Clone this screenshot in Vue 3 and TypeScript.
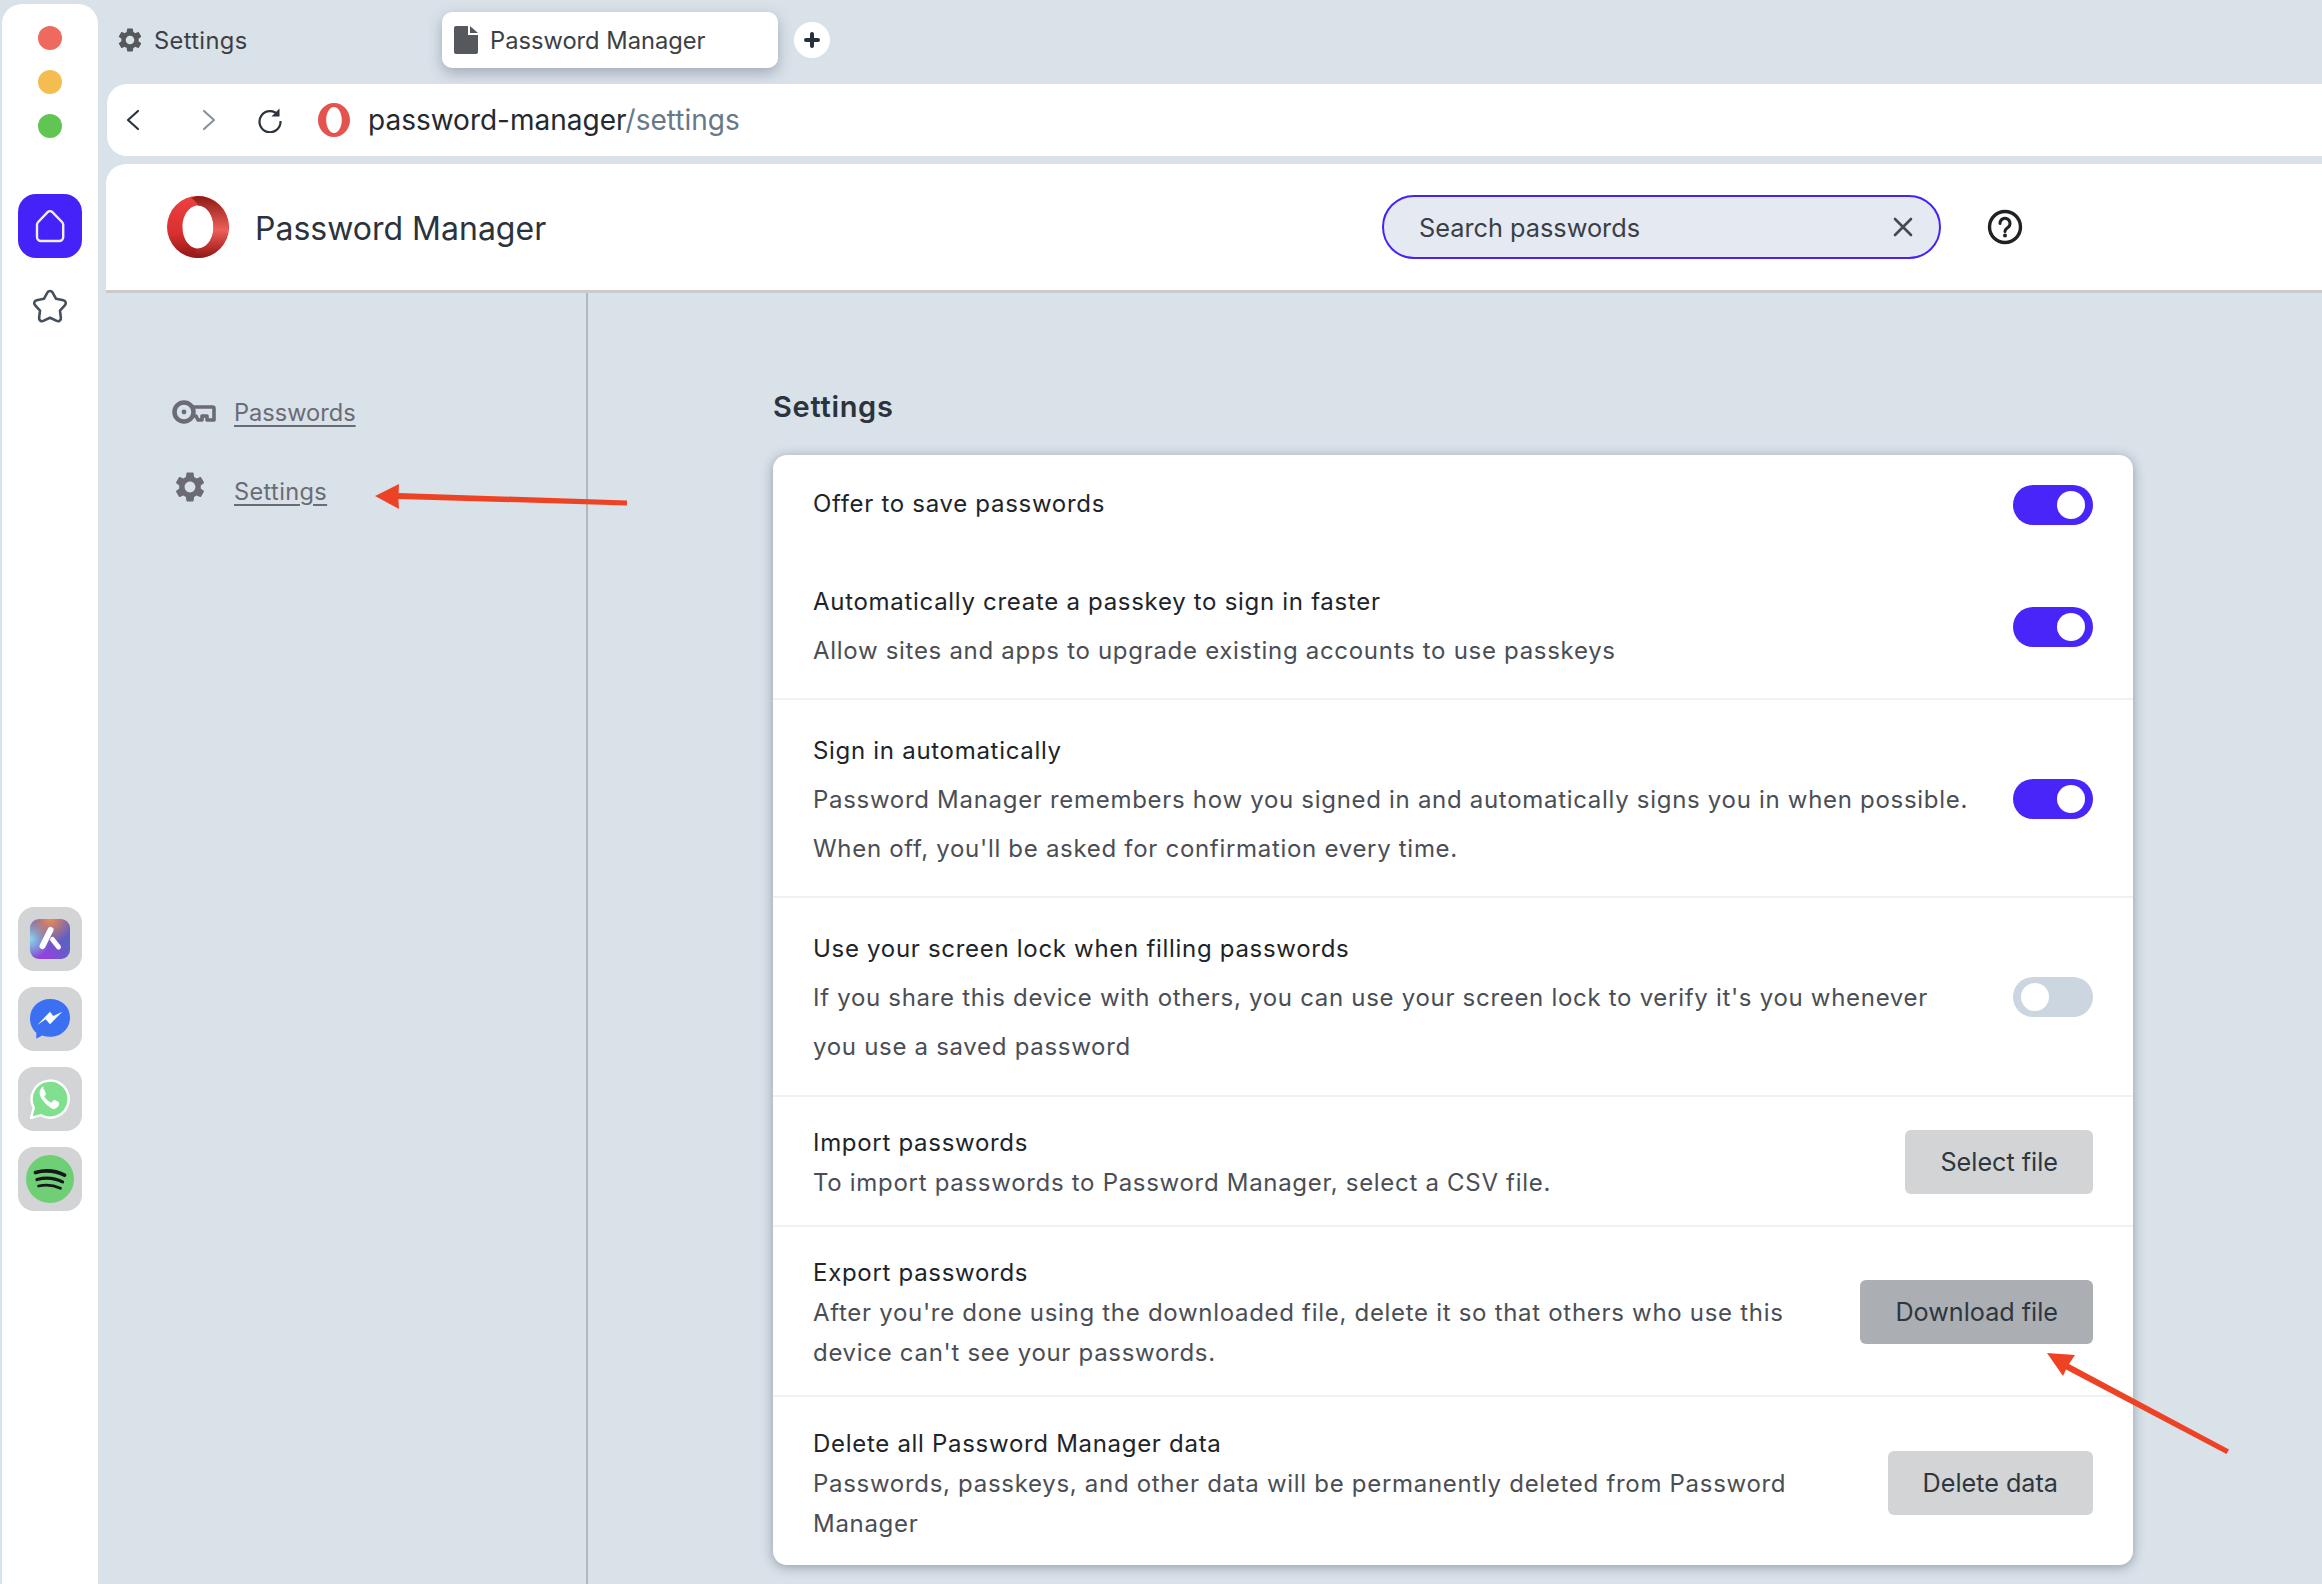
<script setup lang="ts">
interface Row {
  title: string
  lines: string[]
  kind: 'toggle' | 'button'
  on?: boolean
  label?: string
  active?: boolean
  cls: string
}

const rows: Row[] = [
  { title: 'Offer to save passwords', lines: [], kind: 'toggle', on: true, cls: 'wide first' },
  { title: 'Automatically create a passkey to sign in faster', lines: ['Allow sites and apps to upgrade existing accounts to use passkeys'], kind: 'toggle', on: true, cls: 'wide second rule' },
  { title: 'Sign in automatically', lines: ['Password Manager remembers how you signed in and automatically signs you in when possible.', "When off, you'll be asked for confirmation every time."], kind: 'toggle', on: true, cls: 'wide rule' },
  { title: 'Use your screen lock when filling passwords', lines: ["If you share this device with others, you can use your screen lock to verify it's you whenever", 'you use a saved password'], kind: 'toggle', on: false, cls: 'wide rule fourth' },
  { title: 'Import passwords', lines: ['To import passwords to Password Manager, select a CSV file.'], kind: 'button', label: 'Select file', cls: 'tight rule' },
  { title: 'Export passwords', lines: ["After you're done using the downloaded file, delete it so that others who use this", "device can't see your passwords."], kind: 'button', label: 'Download file', active: true, cls: 'tight rule' },
  { title: 'Delete all Password Manager data', lines: ['Passwords, passkeys, and other data will be permanently deleted from Password', 'Manager'], kind: 'button', label: 'Delete data', cls: 'tight last' },
]

const gear =
  'M19.14 12.94c.04-.3.06-.61.06-.94 0-.32-.02-.64-.07-.94l2.03-1.58a.49.49 0 0 0 .12-.61l-1.92-3.32a.488.488 0 0 0-.59-.22l-2.39.96c-.5-.38-1.03-.7-1.62-.94l-.36-2.54a.484.484 0 0 0-.48-.41h-3.84c-.24 0-.43.17-.47.41l-.36 2.54c-.59.24-1.13.57-1.62.94l-2.39-.96c-.22-.08-.47 0-.59.22L2.74 8.87c-.12.21-.08.47.12.61l2.03 1.58c-.05.3-.09.63-.09.94s.02.64.07.94l-2.03 1.58a.49.49 0 0 0-.12.61l1.92 3.32c.12.22.37.29.59.22l2.39-.96c.5.38 1.03.7 1.62.94l.36 2.54c.05.24.24.41.48.41h3.84c.24 0 .44-.17.47-.41l.36-2.54c.59-.24 1.13-.56 1.62-.94l2.39.96c.22.08.47 0 .59-.22l1.92-3.32c.12-.22.07-.47-.12-.61l-2.01-1.58zM12 15.6c-1.98 0-3.6-1.62-3.6-3.6s1.62-3.6 3.6-3.6 3.6 1.62 3.6 3.6-1.62 3.6-3.6 3.6z'
</script>

<template>
  <div class="app">
    <aside class="rail">
      <div class="lights">
        <span class="light red"></span>
        <span class="light amber"></span>
        <span class="light green"></span>
      </div>
      <div class="home">
        <svg width="32" height="34" viewBox="0 0 32 34" fill="none" stroke="#f1efff" stroke-width="2.4" stroke-linejoin="round">
          <path d="M13.6 3.2a3.4 3.4 0 0 1 4.8 0l9.6 9.8a4 4 0 0 1 1.2 2.8V28a4 4 0 0 1-4 4H7a4 4 0 0 1-4-4V15.800a4 4 0 0 1 1.200-2.800z" />
        </svg>
      </div>
      <svg class="star" width="38" height="36" viewBox="0 0 38 36" fill="none" stroke="#46505c" stroke-width="2.600" stroke-linejoin="round">
        <path d="M16.500 3.400a3 3 0 0 1 5 0l3.600 6.400 7.300 1.500c2.300.5 3.200 3.200 1.600 4.900l-5 5.400.9 7.300c.3 2.300-2.100 4-4.200 3l-6.700-3.100-6.700 3.100c-2.100 1-4.500-.7-4.200-3l.9-7.300-5-5.400c-1.600-1.700-.7-4.400 1.600-4.900l7.300-1.500z" />
      </svg>
      <div class="apps">
        <div class="tile">
          <div class="aria">
            <svg width="40" height="40" viewBox="0 0 40 40" fill="none" stroke="#fff" stroke-linecap="round">
              <path d="M20.500 11 12.500 27" stroke-width="6" />
              <path d="M22.500 20.500 28.500 28" stroke-width="5" />
            </svg>
          </div>
        </div>
        <div class="tile">
          <svg width="40" height="40" viewBox="0 0 40 40">
            <path d="M20 0C8.700 0 0 8.300 0 19.400c0 5.800 2.400 10.900 6.300 14.400v6l5.900-3.200c2.400.8 5 1.200 7.800 1.200 11.300 0 20-8.300 20-19.400S31.300 0 20 0z" fill="#3b70f2" />
            <path d="M7.300 26 20 12.700 23.300 17 32.300 12.700 20 25.300 15.700 20.300z" fill="#fff" />
          </svg>
        </div>
        <div class="tile">
          <svg width="40" height="40" viewBox="0 0 40 40">
            <path d="M1 39l2.800-10.200A18.500 18.500 0 1 1 11 36.200z" fill="#80e08f" stroke="#fff" stroke-width="2.400" />
            <path d="M13.800 9.700c-.5 0-1.300.2-2 1-.7.700-2.600 2.500-2.600 6.100s2.700 7.100 3 7.600 5.200 8 12.700 11c-.1 0 0 0 0 0 1.500 0 5.800-1.800 6.100-4.600.3-1.500.3-2.700.2-3-.1-.3-.4-.4-.9-.7l-4-2c-.5-.2-.9-.3-1.300.3-.4.600-1.500 1.900-1.800 2.200-.3.400-.7.400-1.200.2-.5-.3-2.300-.9-4.300-2.700-1.600-1.400-2.700-3.200-3-3.700-.3-.5 0-.8.200-1.100l.9-1c.2-.3.300-.6.500-.9.200-.3.100-.7 0-.9l-1.900-4.400c-.4-1-.9-1-1.300-1z" fill="#fff" transform="translate(1.500 -1) scale(.88)" />
          </svg>
        </div>
        <div class="tile">
          <svg width="48" height="48" viewBox="0 0 48 48">
            <circle cx="24" cy="24" r="24" fill="#6ecf75" />
            <g fill="none" stroke="#15171a" stroke-linecap="round">
              <path d="M9.500 17.500c9-2.400 20-1.800 29 2.600" stroke-width="3.800" />
              <path d="M11 24.500c8-2 18-1.400 25.500 2.400" stroke-width="3.300" />
              <path d="M12.500 31c7-1.600 15-1 22 2.200" stroke-width="2.800" />
            </g>
          </svg>
        </div>
      </div>
    </aside>

    <div class="main">
      <div class="tabs">
        <div class="tab">
          <svg width="24" height="24" viewBox="0 0 24 24" fill="#55585d"><path :d="gear" transform="translate(-2.400 -2.400) scale(1.200)" /></svg>
          <span class="spaced">Settings</span>
        </div>
        <div class="tab current">
          <svg width="24" height="28" viewBox="0 0 24 28"><path d="M2 0h12v9h10v17a2 2 0 0 1-2 2H2a2 2 0 0 1-2-2V2a2 2 0 0 1 2-2z" fill="#55585d" /><path d="M16 0l8 7h-8z" fill="#55585d" /></svg>
          <span>Password Manager</span>
        </div>
        <div class="plus">
          <svg width="16" height="16" viewBox="0 0 16 16" stroke="#27313c" stroke-width="4" stroke-linecap="round"><path d="M8 2v12M2 8h12" /></svg>
        </div>
      </div>

      <div class="address">
        <svg class="back" width="14" height="22" viewBox="0 0 14 22" fill="none" stroke="#2b333c" stroke-width="2.200" stroke-linecap="round" stroke-linejoin="round"><path d="M12 2 2 11l10 9" /></svg>
        <svg class="forward" width="14" height="22" viewBox="0 0 14 22" fill="none" stroke="#8c939b" stroke-width="2.200" stroke-linecap="round" stroke-linejoin="round"><path d="M2 2l10 9-10 9" /></svg>
        <svg class="reload" width="26" height="26" viewBox="0 0 26 26" fill="none" stroke="#2b333c" stroke-width="2.200"><path d="M21.500 8.500A10.500 10.500 0 1 0 23.500 14" /><path d="M22.500 1.500v8h-8z" fill="#2b333c" stroke="none" /></svg>
        <svg class="mini-o" width="32" height="34" viewBox="0 0 32 34"><path fill-rule="evenodd" d="M16 0c8.800 0 16 7.600 16 17s-7.200 17-16 17S0 26.400 0 17 7.200 0 16 0zm0 4c-4.300 0-7.800 5.800-7.800 13S11.700 30 16 30s7.800-5.800 7.800-13S20.300 4 16 4z" fill="#e5534f" /></svg>
        <span class="url">password-manager<span class="path">/settings</span></span>
      </div>

      <header class="head">
        <svg class="logo" width="62" height="62" viewBox="0 0 62 62">
          <defs>
            <linearGradient id="ringBase" x1="0" y1="0" x2="0" y2="1">
              <stop offset="0" stop-color="#f04040" />
              <stop offset=".6" stop-color="#d8302f" />
              <stop offset="1" stop-color="#8f1616" />
            </linearGradient>
            <linearGradient id="ringSide" x1="0" y1="0" x2="0" y2="1">
              <stop offset="0" stop-color="#8c1a14" />
              <stop offset=".55" stop-color="#ee5f58" />
              <stop offset=".85" stop-color="#b42a28" />
              <stop offset="1" stop-color="#8c1a14" />
            </linearGradient>
          </defs>
          <path fill-rule="evenodd" d="M31 0a31 31 0 1 1 0 62 31 31 0 0 1 0-62zm0 9.500c-8.600 0-15.500 9.600-15.500 21.500S22.400 52.500 31 52.500 46.500 42.900 46.500 31 39.600 9.500 31 9.500z" fill="url(#ringBase)" />
          <path d="M30 0a31 31 0 0 1 1 62c-3 0-6-1-8-3 2.400 0 5-1.500 8-6.500 8.600 0 15.500-9.600 15.500-21.500S39.600 9.500 31 9.500C29 6 27 3.500 24 2z" fill="url(#ringSide)" />
        </svg>
        <h1 class="brand">Password Manager</h1>
        <div class="search">
          <span>Search passwords</span>
          <svg width="22" height="22" viewBox="0 0 22 22" stroke="#46494e" stroke-width="2.600" stroke-linecap="round"><path d="M3 3l16 16M19 3 3 19" /></svg>
        </div>
        <svg class="help" width="36" height="36" viewBox="0 0 36 36" fill="none" stroke="#202326" stroke-width="3.400">
          <circle cx="18" cy="18" r="15.500" />
          <path d="M13 14.500a5 5 0 1 1 7.800 4c-1.800 1.200-2.800 2-2.800 4" stroke-width="3" stroke-linecap="round" />
          <circle cx="18" cy="26.500" r="2" fill="#202326" stroke="none" />
        </svg>
      </header>

      <div class="body">
        <nav class="nav">
          <a class="item">
            <svg class="ico" width="44" height="24" viewBox="0 0 44 24" fill="none" stroke="#6a6b75" stroke-width="4.500">
              <circle cx="12" cy="12" r="9.500" />
              <circle cx="12" cy="12" r="2.400" fill="#6a6b75" stroke="none" />
              <path d="M21 7h19.500a1.500 1.500 0 0 1 1.500 1.500V20h-7v-4h-5v4h-4l-2-4h-3" stroke-width="3.600" stroke-linejoin="round" />
            </svg>
            <span>Passwords</span>
          </a>
          <a class="item">
            <span class="ico-box">
              <svg width="36" height="36" viewBox="0 0 24 24" fill="#6a6b75"><path :d="gear" /></svg>
            </span>
            <span class="spaced">Settings</span>
          </a>
        </nav>

        <section class="content">
          <h2 class="heading">Settings</h2>
          <div class="card">
            <div v-for="row in rows" :key="row.title" class="row" :class="row.cls">
              <div class="copy">
                <div class="title">{{ row.title }}</div>
                <div v-for="line in row.lines" :key="line" class="desc">{{ line }}</div>
              </div>
              <div v-if="row.kind === 'toggle'" class="toggle" :class="{ on: row.on }">
                <span class="knob"></span>
              </div>
              <button v-else class="btn" :class="{ pressed: row.active }">{{ row.label }}</button>
            </div>
          </div>
        </section>
      </div>
    </div>

    <svg class="marks" width="2322" height="1584" viewBox="0 0 2322 1584">
      <path d="M375 496 399 484 398.600 493 627 500.500 627 505.500 398.400 499 399 509z" fill="#ee4225" />
      <path d="M2047 1353 2075 1355 2069 1364 2229 1449.500 2226.500 1454 2066 1369.500 2063 1376z" fill="#ee4225" />
    </svg>
  </div>
</template>

<style>
html,
body {
  margin: 0;
  background: #d9e1e9;
}
</style>

<style scoped>
.app {
  position: relative;
  display: flex;
  width: 2322px;
  height: 1584px;
  overflow: hidden;
  background: #d9e1e9;
  font-family: Inter, "Noto Sans", sans-serif;
  color: #2b333c;
}

.rail {
  box-sizing: border-box;
  flex: none;
  display: flex;
  flex-direction: column;
  align-items: center;
  width: 96px;
  margin: 4px 0 0 2px;
  padding-top: 22px;
  background: #fff;
  border-radius: 20px 20px 0 0;
}
.lights {
  display: flex;
  flex-direction: column;
  gap: 20px;
}
.light {
  width: 24px;
  height: 24px;
  border-radius: 50%;
}
.red { background: #ee6a5f; }
.amber { background: #f5bd4f; }
.green { background: #61c554; }

.home {
  display: flex;
  align-items: center;
  justify-content: center;
  width: 64px;
  height: 64px;
  margin-top: 56px;
  border-radius: 18px;
  background: #4523f8;
}
.star {
  margin-top: 31px;
}
.apps {
  display: flex;
  flex-direction: column;
  gap: 16px;
  margin-top: 582px;
}
.tile {
  display: flex;
  align-items: center;
  justify-content: center;
  width: 64px;
  height: 64px;
  border-radius: 16px;
  background: #d3d4d6;
}
.aria {
  width: 40px;
  height: 40px;
  border-radius: 9px;
  overflow: hidden;
  background:
    radial-gradient(circle at 50% 0, #ee8a52 0, rgba(238, 138, 82, 0) 55%),
    radial-gradient(circle at 0 50%, #8fd8e8 0, rgba(143, 216, 232, 0) 45%),
    radial-gradient(circle at 35% 100%, #9a3fe0 0, rgba(154, 63, 224, 0) 55%),
    #5f5fc4;
}

.main {
  flex: 1;
  min-width: 0;
  display: flex;
  flex-direction: column;
  margin-left: 8px;
}
.tabs {
  display: flex;
  align-items: center;
  height: 80px;
  flex: none;
  font-size: 23.7px;
  color: #3c4043;
}
.tab {
  box-sizing: border-box;
  display: flex;
  align-items: center;
  gap: 12px;
  height: 56px;
  margin-left: 12px;
  width: 336px;
}
.tab.current {
  margin-left: -12px;
  padding-left: 12px;
  background: #fff;
  border-radius: 10px;
  box-shadow: 0 5px 14px rgba(60, 72, 95, 0.35);
}
.plus {
  display: flex;
  align-items: center;
  justify-content: center;
  width: 36px;
  height: 36px;
  margin-left: 16px;
  border-radius: 50%;
  background: #fff;
}
.spaced {
  letter-spacing: 0.35px;
}

.address {
  display: flex;
  align-items: center;
  flex: none;
  height: 72px;
  margin: 4px 0 0 1px;
  background: #fff;
  border-radius: 20px 0 0 20px;
}
.back { margin-left: 19px; }
.forward { margin-left: 62px; }
.reload { margin-left: 41px; }
.mini-o { margin-left: 35px; }
.url {
  margin-left: 18px;
  font-size: 28px;
  color: #24292f;
}
.path {
  color: #66788a;
}

.head {
  box-sizing: border-box;
  display: flex;
  align-items: center;
  flex: none;
  height: 129px;
  margin-top: 8px;
  padding: 0 299px 0 61px;
  background: #fff;
  border-bottom: 3px solid #c8cacc;
  border-radius: 20px 0 0 0;
}
.brand {
  margin: 3px 0 0 26px;
  font-size: 32px;
  font-weight: 400;
  color: #2b333c;
}
.search {
  box-sizing: border-box;
  display: flex;
  align-items: center;
  justify-content: space-between;
  width: 559px;
  height: 64px;
  margin-left: auto;
  padding: 0 25px 0 35px;
  border: 2px solid #4523f8;
  border-radius: 32px;
  background: #e4e9f2;
  font-size: 25.3px;
  color: #3a3f46;
}
.help {
  margin-left: 46px;
}

.body {
  flex: 1;
  display: flex;
  min-height: 0;
}
.nav {
  box-sizing: border-box;
  flex: none;
  display: flex;
  flex-direction: column;
  gap: 43px;
  width: 482px;
  padding: 101px 0 0 66px;
  border-right: 2px solid #b3b6ba;
}
.item {
  display: flex;
  align-items: center;
  gap: 18px;
  height: 36px;
  font-size: 23.6px;
  color: #6a6b75;
  text-decoration: underline;
  text-underline-offset: 4px;
}
.ico { flex: none; }
.ico-box {
  display: flex;
  justify-content: flex-start;
  flex: none;
  width: 44px;
  margin-top: -8px;
}
.content {
  flex: 1;
  padding: 92px 0 0 185px;
}
.heading {
  margin: 0 0 26px;
  font-size: 29px;
  line-height: 44px;
  font-weight: 600;
  letter-spacing: 0.7px;
  color: #2b333c;
}
.card {
  width: 1360px;
  background: #fff;
  border-radius: 14px;
  box-shadow: 0 2px 12px rgba(50, 60, 80, 0.42);
}
.row {
  box-sizing: content-box;
  display: flex;
  align-items: center;
  justify-content: space-between;
  padding: 25px 40px 24px;
}
.row.second { padding-bottom: 22px; }
.row.fourth { padding-bottom: 25px; }
.row.rule { border-bottom: 2px solid #f0f1f2; }
.row.tight { padding: 25px 40px 23px; }
.row.tight.last { padding: 26px 40px 22px; }
.copy {
  position: relative;
  top: 1px;
  white-space: nowrap;
  letter-spacing: 0.7px;
}
.first .copy,
.second .copy {
  top: -1px;
}
.wide .title,
.wide .desc { line-height: 49px; }
.tight .title,
.tight .desc { line-height: 40px; }
.title {
  font-size: 24px;
  color: #202428;
}
.desc {
  font-size: 24px;
  color: #4a4e54;
}
.toggle {
  display: flex;
  align-items: center;
  justify-content: flex-start;
  flex: none;
  box-sizing: border-box;
  width: 80px;
  height: 40px;
  padding: 0 8px;
  border-radius: 20px;
  background: #ccd6e1;
}
.toggle.on {
  justify-content: flex-end;
  background: #4a25f9;
}
.knob {
  width: 28px;
  height: 28px;
  border-radius: 50%;
  background: #fff;
}
.btn {
  flex: none;
  height: 64px;
  padding: 0 35px;
  border: 0;
  border-radius: 6px;
  background: #d3d4d6;
  font-family: inherit;
  font-size: 25.2px;
  color: #2e3640;
}
.btn.pressed {
  background: #abaeb3;
}

.marks {
  position: absolute;
  top: 0;
  left: 0;
  pointer-events: none;
}
</style>
